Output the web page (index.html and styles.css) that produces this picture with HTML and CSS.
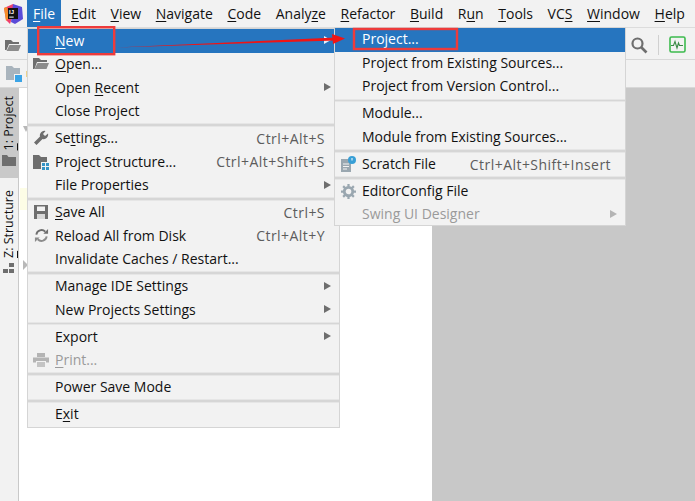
FILE: index.html
```html
<!DOCTYPE html>
<html lang="en">
<head>
<meta charset="utf-8">
<title>IntelliJ IDEA - File New Project</title>
<link rel="stylesheet" href="styles.css">
</head>
<body>
<div class="app">
  <header class="menubar">
    <svg class="logo" viewBox="0 0 20 20" width="20" height="20">
      <path d="M1 4 L10 0 L12 4 L7 20 L3 16Z" fill="#ee3f6d"/>
      <path d="M10 0 L19 3 L20 15 L12 20 L8 18Z" fill="#5b4bd8"/>
      <path d="M1 4 L4 3 L6 14 L3 17Z" fill="#f58f2a"/>
      <rect x="5" y="4" width="10" height="11" fill="#111"/>
      <text x="6" y="10.400" class="logo-text">IJ</text>
      <rect x="6.200" y="12.600" width="4.500" height="1" fill="#fff"/>
    </svg>
    <nav class="menus">
      <span class="menu active"><u>F</u>ile</span>
      <span class="menu"><u>E</u>dit</span>
      <span class="menu"><u>V</u>iew</span>
      <span class="menu"><u>N</u>avigate</span>
      <span class="menu"><u>C</u>ode</span>
      <span class="menu">Analy<u>z</u>e</span>
      <span class="menu"><u>R</u>efactor</span>
      <span class="menu"><u>B</u>uild</span>
      <span class="menu">R<u>u</u>n</span>
      <span class="menu"><u>T</u>ools</span>
      <span class="menu">VC<u>S</u></span>
      <span class="menu"><u>W</u>indow</span>
      <span class="menu"><u>H</u>elp</span>
    </nav>
  </header>
  <div class="toolbar">
    <svg class="tool-folder" viewBox="0 0 16 14" width="16" height="14"><path d="M0 2h6l2 2h6v2H4L1.500 12H0Z" fill="#6e6e6e"/><path d="M4.500 7H16l-2.500 6H1.500Z" fill="#8c8c8c"/></svg>
    <div class="toolbar-right">
      <svg viewBox="0 0 18 18" width="18" height="18"><circle cx="7.500" cy="7.500" r="5" fill="none" stroke="#6e6e6e" stroke-width="2.200"/><path d="M11 11l5.500 5.500" stroke="#6e6e6e" stroke-width="2.600"/></svg>
      <i class="tool-sep"></i>
      <svg viewBox="0 0 17 17" width="17" height="17"><rect x="1" y="1" width="15" height="15" rx="1.500" fill="none" stroke="#3dbb4e" stroke-width="1.600"/><path d="M2 9.500h2.500l1.500-4 2 6.500 1.500-5 1 2.500h3.500" fill="none" stroke="#3a8a46" stroke-width="1.100"/></svg>
    </div>
  </div>
  <div class="navbar">
    <svg viewBox="0 0 16 16" width="16" height="16"><path d="M0 0h6l2 2h6v6H8v6H0Z" fill="#a9b4bd"/><rect x="9" y="9" width="7" height="7" fill="#3ba4e6"/></svg>
    <i class="nav-mark"></i>
  </div>
  <main class="workspace">
    <aside class="stripe">
      <div class="stripe-btn active-btn">
        <span class="stripe-label"><u>1</u>: Project</span>
        <svg viewBox="0 0 14 11" width="14" height="11"><path d="M0 0h5l1.500 2H14v9H0Z" fill="#6e6e6e"/></svg>
      </div>
      <div class="stripe-btn">
        <span class="stripe-label"><u>Z</u>: Structure</span>
        <svg viewBox="0 0 12 11" width="12" height="11"><rect x="6" y="0" width="5" height="4" fill="#6e6e6e"/><rect x="0" y="6" width="5" height="4" fill="#6e6e6e"/><rect x="6" y="6" width="5" height="4" fill="#6e6e6e"/></svg>
      </div>
    </aside>
    <section class="project-panel">
      <i class="tri-down"></i>
      <i class="pale-block"></i>
      <i class="tri-right"></i>
    </section>
    <section class="editor"></section>
  </main>

  <div class="popup file-menu">
    <div class="row selected"><span class="slot"></span><span class="label"><u>N</u>ew</span><i class="arrow"></i></div>
    <div class="row"><span class="slot"><svg viewBox="0 0 16 14" width="16" height="14"><path d="M0 1h6l2 2h6v2H4L1.500 12H0Z" fill="#6e6e6e"/><path d="M4.500 6H16l-2.500 6H1.500Z" fill="#8c8c8c"/></svg></span><span class="label"><u>O</u>pen...</span></div>
    <div class="row"><span class="slot"></span><span class="label">Open <u>R</u>ecent</span><i class="arrow"></i></div>
    <div class="row"><span class="slot"></span><span class="label">Close Project</span></div>
    <div class="sep"></div>
    <div class="row"><span class="slot"><svg viewBox="0 0 16 16" width="16" height="16"><path d="M15 3.500l-3 2.500-2-2 2.500-3A4.500 4.500 0 0 0 7 6.500L1 12.500 3.500 15l6-6A4.500 4.500 0 0 0 15 3.500Z" fill="#6e6e6e"/></svg></span><span class="label">Se<u>t</u>tings...</span><span class="keys">Ctrl+Alt+S</span></div>
    <div class="row"><span class="slot"><svg viewBox="0 0 16 16" width="16" height="16"><path d="M0 1h6l2 2h6v5H8v7H0Z" fill="#6e6e6e"/><rect x="9" y="9" width="3" height="3" fill="#3592c4"/><rect x="13" y="9" width="3" height="3" fill="#3592c4"/><rect x="9" y="13" width="3" height="3" fill="#3592c4"/><rect x="13" y="13" width="3" height="3" fill="#3592c4"/></svg></span><span class="label">Project Structure...</span><span class="keys">Ctrl+Alt+Shift+S</span></div>
    <div class="row"><span class="slot"></span><span class="label">File Properties</span><i class="arrow"></i></div>
    <div class="sep"></div>
    <div class="row"><span class="slot"><svg viewBox="0 0 14 14" width="14" height="14"><path d="M0 0h14v14H0Z" fill="#6e6e6e"/><rect x="3" y="1.500" width="8" height="4.500" fill="#f2f2f2"/><rect x="3" y="9" width="8" height="5" fill="#d8d8d8"/></svg></span><span class="label"><u>S</u>ave All</span><span class="keys">Ctrl+S</span></div>
    <div class="row"><span class="slot"><svg viewBox="0 0 16 16" width="15" height="15"><path d="M2.500 7A5.500 5.500 0 0 1 12 4" fill="none" stroke="#6e6e6e" stroke-width="2"/><path d="M13.500 9A5.500 5.500 0 0 1 4 12" fill="none" stroke="#8c8c8c" stroke-width="2"/><path d="M10 6h5V1Z" fill="#6e6e6e"/><path d="M6 10H1v5Z" fill="#8c8c8c"/></svg></span><span class="label">Reload All from Disk</span><span class="keys">Ctrl+Alt+Y</span></div>
    <div class="row"><span class="slot"></span><span class="label">Invalidate Caches / Restart...</span></div>
    <div class="sep"></div>
    <div class="row"><span class="slot"></span><span class="label">Manage IDE Settings</span><i class="arrow"></i></div>
    <div class="row"><span class="slot"></span><span class="label">New Projects Settings</span><i class="arrow"></i></div>
    <div class="sep"></div>
    <div class="row"><span class="slot"></span><span class="label">Export</span><i class="arrow"></i></div>
    <div class="row disabled"><span class="slot"><svg viewBox="0 0 16 14" width="16" height="14"><rect x="4" y="0" width="8" height="4" fill="#b4b4b4"/><path d="M0 4.500h16v5h-3V8H3v1.500H0Z" fill="#b4b4b4"/><rect x="4" y="9" width="8" height="5" fill="#c4c4c4"/></svg></span><span class="label"><u>P</u>rint...</span></div>
    <div class="sep"></div>
    <div class="row"><span class="slot"></span><span class="label">Power Save Mode</span></div>
    <div class="sep"></div>
    <div class="row"><span class="slot"></span><span class="label">E<u>x</u>it</span></div>
  </div>

  <div class="popup new-menu">
    <div class="row selected"><span class="slot"></span><span class="label">Project...</span></div>
    <div class="row"><span class="slot"></span><span class="label">Project from Existing Sources...</span></div>
    <div class="row"><span class="slot"></span><span class="label">Project from Version Control...</span></div>
    <div class="sep"></div>
    <div class="row"><span class="slot"></span><span class="label">Module...</span></div>
    <div class="row"><span class="slot"></span><span class="label">Module from Existing Sources...</span></div>
    <div class="sep"></div>
    <div class="row"><span class="slot"><svg viewBox="0 0 16 16" width="16" height="16"><path d="M1 3h10v13H1Z" fill="#9aa7b0"/><path d="M3 8h6M3 10.500h6M3 13h4" stroke="#f2f2f2"/><circle cx="12" cy="4" r="4" fill="#389fd6"/><path d="M12 2v2.500" stroke="#fff"/></svg></span><span class="label">Scratch File</span><span class="keys">Ctrl+Alt+Shift+Insert</span></div>
    <div class="sep"></div>
    <div class="row"><span class="slot"><svg viewBox="0 0 16 16" width="15" height="15"><circle cx="8" cy="8" r="4.500" fill="none" stroke="#9aa7b0" stroke-width="3"/><path d="M8 0v3M8 13v3M0 8h3M13 8h3M2.300 2.300l2.200 2.200M11.500 11.500l2.200 2.200M13.700 2.300l-2.200 2.200M4.500 11.500l-2.200 2.200" stroke="#9aa7b0" stroke-width="2.400"/></svg></span><span class="label">EditorConfig File</span></div>
    <div class="row disabled"><span class="slot"></span><span class="label">Swing UI Designer</span><i class="arrow"></i></div>
  </div>

  <svg class="annotations" viewBox="0 0 695 501" width="695" height="501">
    <rect x="38.200" y="27.200" width="76" height="27" fill="none" stroke="#ee3b3b" stroke-width="2.400"/>
    <rect x="354" y="29" width="103" height="20" fill="none" stroke="#ee3b3b" stroke-width="2.400"/>
    <path d="M116 47.500 L336 37.500 L336 40.500 Z" fill="#f01414"/>
    <path d="M345 38.500 L332 34 L333 44 Z" fill="#f01414"/>
  </svg>
</div>
</body>
</html>
```
FILE: styles.css
```css
* { box-sizing: border-box; }
html, body { margin: 0; padding: 0; }
body {
  width: 695px;
  height: 501px;
  overflow: hidden;
  font-family: "Open Sans", "Noto Sans", sans-serif;
  font-size: 14px;
  color: #111;
  background: #fff;
}
u { text-underline-offset: 2px; text-decoration-thickness: 1px; }

.app {
  position: relative;
  width: 695px;
  height: 501px;
  display: flex;
  flex-direction: column;
}

.menubar {
  height: 27px;
  display: flex;
  align-items: stretch;
  background: #f2f2f2;
  flex: none;
}
.logo { margin: 4px 0 0 3px; flex: none; }
.logo-text { font: bold 6px "Liberation Sans", sans-serif; fill: #fff; }
.menus {
  display: flex;
  margin-left: 4px;
}
.menu {
  display: flex;
  align-items: center;
  white-space: pre;
  padding: 0 7.300px;
  line-height: 27px;
}
.menu.active { background: #2675bf; color: #fff; padding: 0 6px; margin-right: 2.600px; }

.toolbar {
  height: 33px;
  flex: none;
  display: flex;
  align-items: center;
  justify-content: space-between;
  padding: 2px 9px 0 5px;
  background: #f2f2f2;
  border-top: 1px solid #dcdcdc;
  border-bottom: 1px solid #d8d8d8;
}
.toolbar-right { display: flex; align-items: center; gap: 10px; }
.tool-sep { width: 1px; height: 20px; background: #d0d0d0; }

.navbar {
  height: 28px;
  flex: none;
  display: flex;
  align-items: center;
  gap: 4px;
  padding-left: 6px;
  background: #f2f2f2;
  border-bottom: 1px solid #d8d8d8;
}
.nav-mark { width: 2px; height: 6px; background: #ecd28c; }

.workspace { flex: 1; display: flex; min-height: 0; }
.stripe {
  width: 19px;
  flex: none;
  background: #f2f2f2;
  border-right: 1px solid #c9c9c9;
  display: flex;
  flex-direction: column;
  gap: 4px;
}
.stripe-btn {
  display: flex;
  flex-direction: column;
  align-items: center;
  gap: 5px;
  padding: 8px 0 0;
}
.active-btn { background: #c9c9c9; height: 90px; }
.stripe-label {
  writing-mode: vertical-rl;
  transform: rotate(180deg);
  font-size: 12.500px;
  line-height: 18px;
}
.project-panel {
  width: 413px;
  flex: none;
  display: flex;
  flex-direction: column;
  align-items: flex-start;
  padding: 38px 0 0 1px;
  background: #fff;
}
.tri-down {
  margin-left: 3px;
  border-top: 6px solid #b8b8b8;
  border-left: 3px solid transparent;
  border-right: 3px solid transparent;
}
.pale-block { width: 8px; height: 22px; margin-top: 56px; background: #fdfde6; }
.tri-right {
  margin: 50px 0 0 3px;
  border-left: 5px solid #b8b8b8;
  border-top: 5px solid transparent;
  border-bottom: 5px solid transparent;
}
.editor { flex: 1; background: #c8c8c8; }

.popup {
  position: absolute;
  background: #f2f2f2;
  border: 1px solid #d5d5d5;
  white-space: nowrap;
}
.file-menu { left: 27px; top: 28px; width: 313px; height: 400px; }
.new-menu { left: 334px; top: 27px; width: 292px; height: 199px; }

.row {
  height: 23.500px;
  display: flex;
  align-items: center;
  padding-right: 14px;
  position: relative;
}
.slot {
  width: 27px;
  flex: none;
  display: flex;
  justify-content: center;
  padding-right: 1px;
}
.label { flex: 1; padding-bottom: 1px; }
.new-menu .label { padding-bottom: 2px; }
.keys { color: #5c5c5c; letter-spacing: 0.450px; }
.sep { height: 3.500px; border-top: 1px solid #e6e6e6; border-bottom: 1px solid #e6e6e6; background: #d6d6d6; }
.selected { background: #2675bf; color: #fff; }
.disabled { color: #9a9a9a; }
.arrow {
  position: absolute;
  right: 8px;
  top: 7px;
  border-left: 7px solid #6e6e6e;
  border-top: 4.500px solid transparent;
  border-bottom: 4.500px solid transparent;
}
.selected .arrow { border-left-color: #e8eef6; }
.disabled .arrow { border-left-color: #b4b4b4; }

.annotations { position: absolute; left: 0; top: 0; pointer-events: none; }
```
